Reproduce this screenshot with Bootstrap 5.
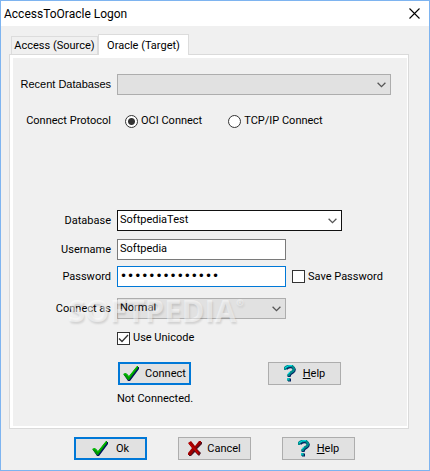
<!DOCTYPE html>
<html lang="en">
<head>
<meta charset="utf-8">
<meta name="viewport" content="width=device-width, initial-scale=1">
<title>AccessToOracle Logon</title>
<link href="https://cdn.jsdelivr.net/npm/bootstrap@5.3.0/dist/css/bootstrap.min.css" rel="stylesheet">
<style>
body{font:11px/16px Roboto,sans-serif;color:#000;background:#f0f0f0}
.dialog{border:1px solid #7eb4f0;min-height:100vh}
.title-bar{height:25px;padding:0 9px 0 3px;background:#fff}
.title-bar h1{font-size:12px;font-weight:400;line-height:24px}
.tab-area{padding:8px 20px 0 8px}
.tab-strip{padding-left:2px}
.tab-btn{border:1px solid #dcdcdc;border-bottom:0;background:#f0f0f0;padding:0;color:#000;white-space:nowrap}
.tab-btn.idle{width:87px;height:18px;line-height:17px}
.tab-btn.current{width:91px;height:21px;line-height:17px;background:#fff;margin-bottom:-1px;z-index:1}
.sheet{border:1px solid #dadada;background:#f0f0f0;box-shadow:inset 3px 3px #fff,inset -1px -2px #fff;padding:19px 17px 21px 3px;position:relative}
.cap{width:98px;margin-right:6px;flex:none;text-align:right;white-space:nowrap;line-height:21px}
.recent{font-family:"Liberation Sans",sans-serif}
.ctl{height:21px;border-radius:0;padding:0 4px 2px 2px;font-size:11px;line-height:16px;color:#000;border:1px solid #7a7a7a;background-color:#fff;min-height:0;box-shadow:none!important}
select.ctl{background-image:url("data:image/svg+xml,%3Csvg xmlns='http://www.w3.org/2000/svg' width='9' height='6' viewBox='0 0 9 6'%3E%3Cpath d='M.6.8 4.5 4.6 8.400.8' fill='none' stroke='%23555' stroke-width='1.300'/%3E%3C/svg%3E");background-size:9px 6px;background-position:right 4px center}
.gray{background-color:#e1e1e1;border-color:#adadad}
.dark{border-color:#111}
.focus-blue{border-color:#0078d7}
.wide{width:225px}.mid{width:169px;flex:none}
.secret{font-family:"DejaVu Sans",sans-serif;font-size:12px}
.tick{appearance:none;width:13px;height:13px;border:1px solid #333;background:#fff;margin:0 3px 0 0;flex:none}
.tick[type=radio]{border-radius:50%}
.tick[type=radio]:checked{background:radial-gradient(circle,#333 3px,#fff 4px)}
.tick[type=checkbox]:checked{background:#fff url("data:image/svg+xml,%3Csvg xmlns='http://www.w3.org/2000/svg' viewBox='0 0 11 11'%3E%3Cpath d='M1 5.500 4 8.500 10 2' fill='none' stroke='%23333' stroke-width='1.300'/%3E%3C/svg%3E")}
.push{border:1px solid #adadad;border-radius:0;background:#e1e1e1;width:73px;height:23px;padding:0;line-height:16px;color:#000;gap:5px}
.push.primary{border:2px solid #0078d7}
.push.ask{gap:7px}
.push.ok{gap:7px}
.indent{margin-left:105px}
.g-15{margin-top:15px}.g-16{margin-top:16px}.g-8{margin-top:8px}.g-6{margin-top:6px}.g-11{margin-top:11px}
.g-far{margin-top:78px}
.proto{height:22px}
.proto-gap{margin-right:26px}
.second{margin-right:50px}
.save{margin-left:6px}
.note{margin-left:104px}
.brand{position:absolute;left:58px;top:239px;font:bold 31px/33px "Open Sans",sans-serif;color:rgba(255,255,255,.5);text-shadow:1px 2px 2px rgba(0,0,0,.12);pointer-events:none}
.brand sup{font-size:9px;top:-16px}
.actions{padding:8px 74px 9px 73px}
</style>
<script src="https://cdn.jsdelivr.net/npm/bootstrap@5.3.0/dist/js/bootstrap.bundle.min.js"></script>
</head>
<body>
<svg class="d-none" aria-hidden="true">
<symbol id="check" viewBox="0 0 17 16"><path d="M1 9 4 8 6 11 14 1h2v2L7 15H5Z" fill="#00105e"/><path d="M0 8 3 7 6 10 14 0h1v2L6 14H5Z" fill="#009a00"/><path d="M1 8h2l3 3 8-10" fill="none" stroke="#00c800"/></symbol>
<symbol id="cross" viewBox="0 0 14 15"><path d="M1 3 3 1 7 6 11 1h3v2L9 8l4 4-2 3-4-4-4 4H1v-3l4-4Z" fill="#4a1020"/><path d="M0 2 3 0 7 5 11 0h2v2L8 7l4 5-2 2-4-5-3 5H0v-2l4-5Z" fill="#a00000"/><path d="m1 2 9 10" stroke="#d60000"/></symbol>
<symbol id="ask" viewBox="0 0 12 17"><path d="M2 4q2-3 6-2 4 2 1 5-4 2-4 5M4 15h3" fill="none" stroke="#002060" stroke-width="3"/><path d="M1 5V3q3-3 7-2 3 2 1 5-4 2-5 5M3 14.500h3" fill="none" stroke="#008b8b" stroke-width="2.500"/><path d="M1 3q3-3 7-2.500M6 7 4 9M3 14h2" fill="none" stroke="#00e5ee"/></symbol>
</svg>
<main class="dialog d-flex flex-column">
<header class="title-bar d-flex justify-content-between align-items-center">
<h1 class="m-0">AccessToOracle Logon</h1>
<button class="border-0 bg-transparent p-0 d-flex" aria-label="Close"><svg width="11" height="11" viewBox="0 0 11 11"><path d="m.5.5 10 10m0-10-10 10" stroke="#000" stroke-width="1.100"/></svg></button>
</header>
<div class="tab-area">
<div class="tab-strip d-flex align-items-end" role="tablist">
<button class="tab-btn idle" role="tab" aria-selected="false">Access (Source)</button>
<button class="tab-btn current position-relative" role="tab" aria-selected="true">Oracle (Target)</button>
</div>
<form class="sheet" role="tabpanel">
<div class="d-flex"><label class="cap recent" for="recent">Recent Databases</label><select id="recent" class="form-select ctl gray flex-fill w-auto"><option></option></select></div>
<div class="d-flex g-15 proto" role="radiogroup" aria-labelledby="proto">
<span class="cap" id="proto">Connect Protocol</span>
<label class="d-flex align-items-center ms-2 proto-gap"><input class="tick" type="radio" name="p" checked>OCI Connect</label>
<label class="d-flex align-items-center"><input class="tick" type="radio" name="p">TCP/IP Connect</label>
</div>
<div class="d-flex g-far"><label class="cap" for="db">Database</label><select id="db" class="form-select ctl dark wide"><option>SoftpediaTest</option></select></div>
<div class="d-flex g-8"><label class="cap" for="user">Username</label><input id="user" class="form-control ctl mid" value="Softpedia"></div>
<div class="d-flex g-6"><label class="cap" for="pw">Password</label><input id="pw" type="password" class="form-control ctl focus-blue mid secret" value="softpediatests"><label class="d-flex align-items-center text-nowrap save"><input class="tick" type="checkbox">Save Password</label></div>
<div class="d-flex g-11"><label class="cap" for="as">Connect as</label><select id="as" class="form-select ctl gray mid"><option>Normal</option></select></div>
<div class="d-flex g-11"><span class="cap"></span><label class="d-flex align-items-center"><input class="tick" type="checkbox" checked>Use Unicode</label></div>
<div class="d-flex justify-content-between g-16 indent second">
<button type="button" class="push primary d-flex align-items-center justify-content-center"><svg width="17" height="16"><use href="#check"/></svg>Connect</button>
<button type="button" class="push ask d-flex align-items-center justify-content-center"><svg width="12" height="17"><use href="#ask"/></svg><span><u>H</u>elp</span></button>
</div>
<div class="g-6 note">Not Connected.</div>
<div class="brand" aria-hidden="true">SOFTPEDIA<sup>®</sup></div>
</form>
</div>
<footer class="actions d-flex justify-content-between">
<button class="push primary ok d-flex align-items-center justify-content-center"><svg width="17" height="16"><use href="#check"/></svg>Ok</button>
<button class="push d-flex align-items-center justify-content-center"><svg width="14" height="15"><use href="#cross"/></svg>Cancel</button>
<button class="push ask d-flex align-items-center justify-content-center"><svg width="12" height="17"><use href="#ask"/></svg><span><u>H</u>elp</span></button>
</footer>
</main>
</body>
</html>
